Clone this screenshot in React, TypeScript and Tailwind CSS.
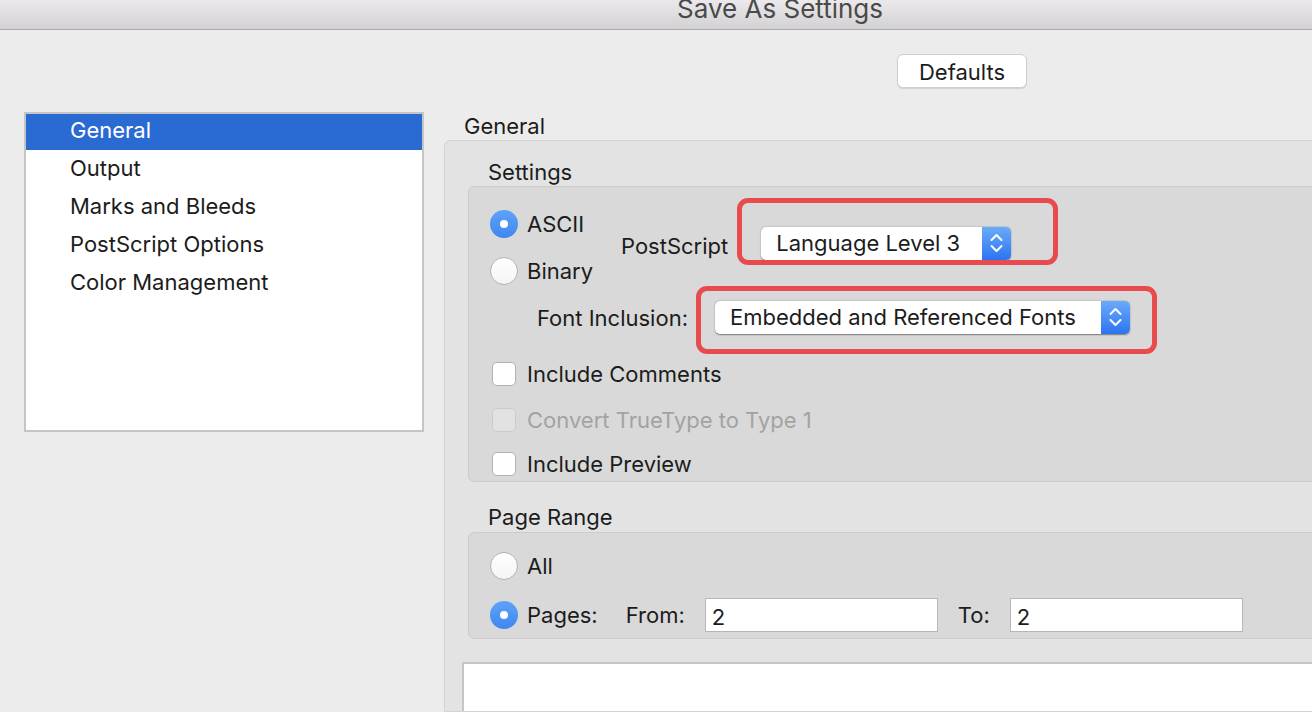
import React from "react";

function Chevrons() {
  return (
    <svg width="29" height="32" viewBox="0 0 29 32" className="block">
      <path d="M9.5 13 L14.5 8 L19.5 13" fill="none" stroke="white" strokeWidth="2" strokeLinecap="round" strokeLinejoin="round" />
      <path d="M9.5 19 L14.5 24 L19.5 19" fill="none" stroke="white" strokeWidth="2" strokeLinecap="round" strokeLinejoin="round" />
    </svg>
  );
}

function Select({ label, width }: { label: string; width: string }) {
  return (
    <div className={`flex h-[33px] ${width} rounded-[5px] bg-white shadow-[0_0.5px_1.5px_rgba(0,0,0,0.45)]`}>
      <div className="flex-1 pl-[15px] leading-[33px] whitespace-nowrap">{label}</div>
      <div className="w-[29px] rounded-r-[5px] bg-gradient-to-b from-[#6aaaf9] to-[#2c73f2]">
        <Chevrons />
      </div>
    </div>
  );
}

function Radio({ checked }: { checked?: boolean }) {
  return checked ? (
    <div className="w-[28px] h-[28px] rounded-full bg-gradient-to-b from-[#5fa2f7] to-[#3e87f1] flex items-center justify-center shrink-0">
      <div className="w-[8px] h-[8px] rounded-full bg-white" />
    </div>
  ) : (
    <div className="w-[28px] h-[28px] rounded-full bg-gradient-to-b from-[#ffffff] to-[#f4f4f4] border border-[#b3b3b3] shrink-0" />
  );
}

function Checkbox({ label, disabled, className }: { label: string; disabled?: boolean; className?: string }) {
  return (
    <div className={`flex items-center h-[24px] ${className ?? ""}`}>
      <div
        className={
          disabled
            ? "w-[24px] h-[24px] rounded-[5px] border border-[#cacaca] bg-[#e2e2e2] shrink-0"
            : "w-[24px] h-[24px] rounded-[5px] border border-[#b1b1b1] bg-white shrink-0"
        }
      />
      <span className={disabled ? "ml-[11px] text-[#a3a3a3]" : "ml-[11px]"}>{label}</span>
    </div>
  );
}

export default function App() {
  const items = ["Output", "Marks and Bleeds", "PostScript Options", "Color Management"];
  return (
    <div className="w-[1312px] h-[712px] overflow-hidden bg-[#ececec] flex flex-col font-[Inter,sans-serif] text-[22px] text-[#1c1c1c]">
      <div className="h-[30px] shrink-0 bg-gradient-to-b from-[#ebe9eb] to-[#d3d1d3] border-b border-[#ababab] flex justify-center pl-[248px]">
        <span className="text-[26px] leading-[26px] -mt-[4px] text-[#4a4a4a]">Save As Settings</span>
      </div>

      <div className="flex flex-col flex-1">
        <div className="mt-[24px] ml-[897px] w-[130px] h-[34px] rounded-[6px] bg-white border border-[#cfcfcf] shadow-[0_1px_1px_rgba(0,0,0,0.12)] flex items-center justify-center pt-[3px]">
          Defaults
        </div>

        <div className="mt-[24px] flex items-start flex-1">
          <div className="ml-[24px] w-[400px] h-[320px] shrink-0 border-2 border-[#c5c5c5] bg-white">
            <div className="h-[36px] bg-[#2a6bd3] text-white pl-[44px] leading-[33px]">General</div>
            {items.map((t) => (
              <div key={t} className="h-[38px] pl-[44px] leading-[37px]">
                {t}
              </div>
            ))}
          </div>

          <div className="ml-[20px] w-[900px] shrink-0 flex flex-col self-stretch">
            <div className="h-[28px] pl-[20px] leading-[28px]">General</div>
            <div className="flex-1 rounded-tl-[6px] border border-[#d3d3d3] bg-[#e3e3e3] pl-[23px] flex flex-col">
              <div className="h-[45px] pt-[17px] pl-[20px] leading-[28px]">Settings</div>

              <div className="h-[296px] rounded-[6px] border border-[#cdcdcd] bg-[#d9d9d9] pl-[21px] pt-[23px] flex flex-col">
                <div className="flex items-center">
                  <div className="flex flex-col gap-[19px] w-[131px]">
                    <div className="flex items-center h-[28px]">
                      <Radio checked />
                      <span className="ml-[9px]">ASCII</span>
                    </div>
                    <div className="flex items-center h-[28px]">
                      <Radio />
                      <span className="ml-[9px]">Binary</span>
                    </div>
                  </div>
                  <span className="-mt-[3px]">PostScript</span>
                  <div className="relative ml-[33px] -mt-[8px]">
                    <div className="absolute left-[-24px] top-[-29px] right-[-47px] bottom-[-5px] rounded-[11px] border-[5px] border-[#e84b4e]" />
                    <Select label="Language Level 3" width="w-[250px]" />
                  </div>
                </div>

                <div className="flex items-center mt-[15px]">
                  <span className="ml-[47px] mt-[2px]">Font Inclusion:</span>
                  <div className="relative ml-[27px]">
                    <div className="absolute left-[-19px] top-[-15px] right-[-27px] bottom-[-20px] rounded-[11px] border-[5px] border-[#e84b4e]" />
                    <Select label="Embedded and Referenced Fonts" width="w-[415px]" />
                  </div>
                </div>

                <div className="mt-[27px] ml-[2px] flex flex-col">
                  <Checkbox label="Include Comments" />
                  <Checkbox label="Convert TrueType to Type 1" disabled className="mt-[22px]" />
                  <Checkbox label="Include Preview" className="mt-[20px]" />
                </div>
              </div>

              <div className="h-[50px] pt-[21px] pl-[20px] leading-[28px]">Page Range</div>

              <div className="h-[107px] rounded-[6px] border border-[#cdcdcd] bg-[#d9d9d9] pl-[21px] pt-[19px] flex flex-col gap-[18px]">
                <div className="flex items-center h-[28px]">
                  <Radio />
                  <span className="ml-[9px]">All</span>
                </div>
                <div className="flex items-center h-[34px]">
                  <Radio checked />
                  <span className="ml-[9px]">Pages:</span>
                  <span className="ml-[28px]">From:</span>
                  <div className="ml-[20px] w-[233px] h-[34px] bg-white border border-[#b6b6b6] pl-[6px] leading-[36px]">2</div>
                  <span className="ml-[20px]">To:</span>
                  <div className="ml-[20px] w-[233px] h-[34px] bg-white border border-[#b6b6b6] pl-[6px] leading-[36px]">2</div>
                </div>
              </div>

              <div className="mt-[23px] -ml-[6px] flex-1 bg-white border-t-2 border-l-2 border-[#c6c6c6]" />
            </div>
          </div>
        </div>
      </div>
    </div>
  );
}
